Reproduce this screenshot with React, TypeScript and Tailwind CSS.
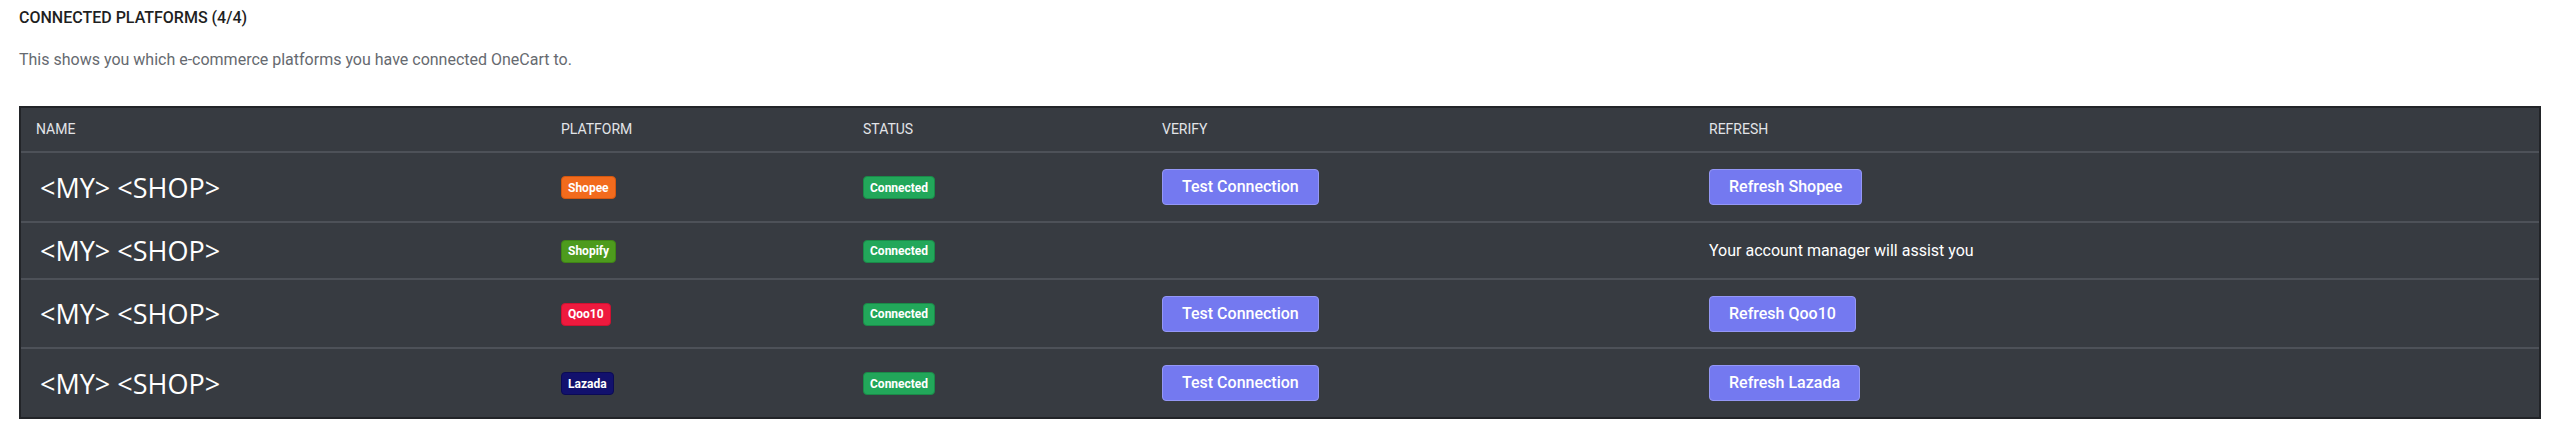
import React from 'react';

type Row = {
  name: string;
  platform: string;
  badge: string;
  canTest: boolean;
  refresh: string | null;
  height: string;
};

const rows: Row[] = [
  { name: '<MY> <SHOP>', platform: 'Shopee', badge: 'bg-[#f26b1d] border-[#d3570f]', canTest: true, refresh: 'Refresh Shopee', height: 'h-[70px]' },
  { name: '<MY> <SHOP>', platform: 'Shopify', badge: 'bg-[#4d9b1d] border-[#3f8416]', canTest: false, refresh: null, height: 'h-[57px]' },
  { name: '<MY> <SHOP>', platform: 'Qoo10', badge: 'bg-[#ee1a3e] border-[#cf1131]', canTest: true, refresh: 'Refresh Qoo10', height: 'h-[69px]' },
  { name: '<MY> <SHOP>', platform: 'Lazada', badge: 'bg-[#12116d] border-[#0b0a55]', canTest: true, refresh: 'Refresh Lazada', height: 'h-[68px]' },
];

const cols = 'grid grid-cols-[524px_302px_299px_547px_1fr]';

function ActionButton({ label }: { label: string }) {
  return (
    <button className="h-[36px] rounded-[4px] border border-[#9497f6] bg-[#7479f0] px-[19px] text-[16px] font-medium text-white">
      {label}
    </button>
  );
}

function Badge({ label, className }: { label: string; className: string }) {
  return (
    <span className={`inline-flex h-[23px] items-center rounded-[4px] border px-[6px] text-[12px] font-bold text-white ${className}`}>
      {label}
    </span>
  );
}

export default function App() {
  return (
    <div className="min-h-[435px] bg-white px-[19px] pt-[8px] font-['Roboto',sans-serif]">
      <h2 className="text-[16px] leading-[20px] font-medium text-[#1f1f1f]">CONNECTED PLATFORMS (4/4)</h2>
      <p className="mt-[22px] text-[16px] leading-[20px] text-[#666a70]">
        This shows you which e-commerce platforms you have connected OneCart to.
      </p>

      <div className="mt-[36px] border-2 border-[#222428] bg-[#373b41]">
        <div className={`${cols} h-[45px] items-center border-b-2 border-[#4d5158] text-[14px] text-[#e2e4e8]`}>
          <div className="pl-[15px]">NAME</div>
          <div className="pl-[16px]">PLATFORM</div>
          <div className="pl-[16px]">STATUS</div>
          <div className="pl-[16px]">VERIFY</div>
          <div className="pl-[16px]">REFRESH</div>
        </div>

        {rows.map((r, i) => (
          <div
            key={i}
            className={`${cols} ${r.height} items-center ${i < rows.length - 1 ? 'border-b-2 border-[#4d5158]' : ''}`}
          >
            <div className="pl-[19px] font-['Open_Sans',sans-serif] text-[27px] leading-none text-white">{r.name}</div>
            <div className="pl-[16px]">
              <Badge label={r.platform} className={r.badge} />
            </div>
            <div className="pl-[16px]">
              <Badge label="Connected" className="bg-[#22a75a] border-[#1a8a48]" />
            </div>
            <div className="pl-[16px]">{r.canTest && <ActionButton label="Test Connection" />}</div>
            <div className="pl-[16px]">
              {r.refresh ? (
                <ActionButton label={r.refresh} />
              ) : (
                <span className="text-[16px] text-white">Your account manager will assist you</span>
              )}
            </div>
          </div>
        ))}
      </div>
    </div>
  );
}
